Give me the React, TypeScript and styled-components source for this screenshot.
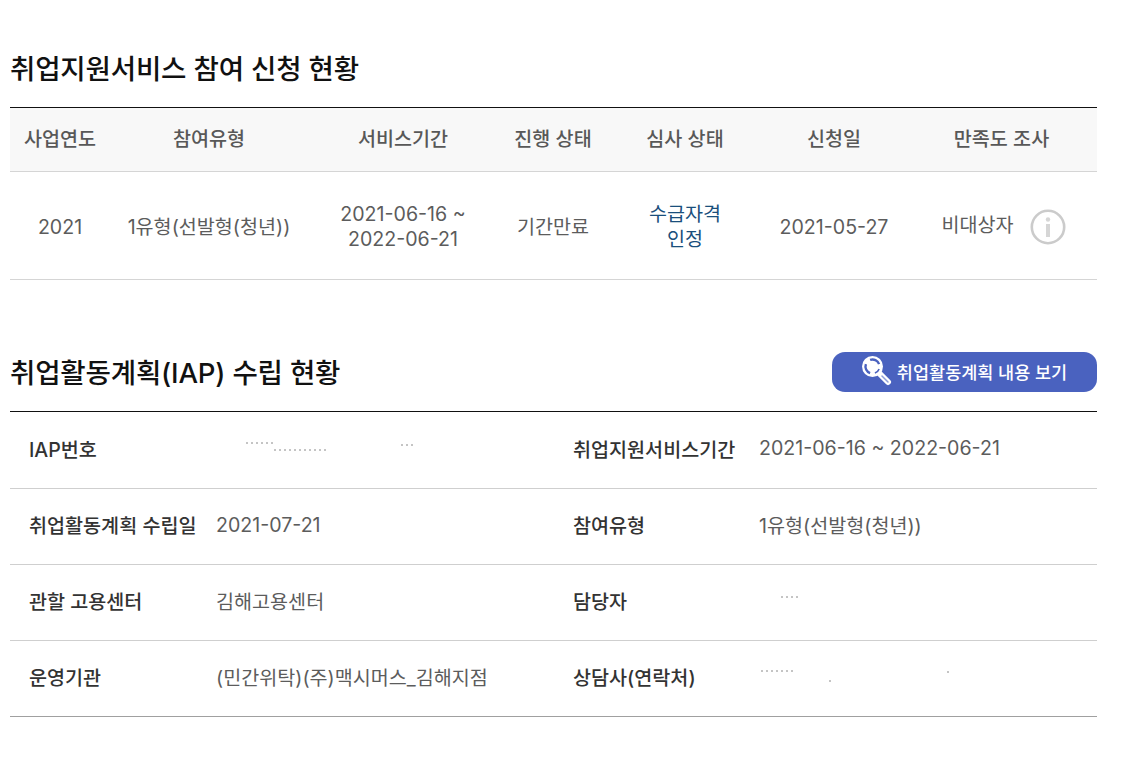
import React from "react";
import styled, { createGlobalStyle } from "styled-components";

const Global = createGlobalStyle`
  html, body { margin: 0; padding: 0; background: #fff; }
  body { font-family: Inter, "Noto Sans CJK KR", sans-serif; }
  *, *::before, *::after { box-sizing: border-box; }
`;

const Page = styled.main`
  width: 1097px;
  padding: 50px 0 0 10px;
`;

const HeadRow = styled.div<{ $h: number; $gap: number }>`
  display: flex;
  align-items: center;
  justify-content: space-between;
  height: ${(p) => p.$h}px;
  margin-bottom: ${(p) => p.$gap}px;
`;

const Title = styled.h2`
  margin: 0;
  padding-top: 2px;
  font-size: 27.6px;
  font-weight: 500;
  line-height: 36px;
  letter-spacing: -0.2px;
  color: #111;
`;

const Table = styled.table`
  width: 100%;
  border-collapse: collapse;
  table-layout: fixed;
  border-top: 1px solid #111;
`;

const Th = styled.th`
  height: 64px;
  padding: 0 0 4px;
  background: #f8f8f8;
  border-bottom: 1px solid #d5d5d5;
  font-size: 19.6px;
  font-weight: 500;
  color: #585858;
  text-align: center;
`;

const Td = styled.td<{ $link?: boolean }>`
  height: 108px;
  padding: 3px 0 0;
  border-bottom: 1px solid #d5d5d5;
  font-size: 19.6px;
  line-height: 25px;
  font-weight: 400;
  color: ${(p) => (p.$link ? "#1a4f7c" : "#5c5c5c")};
  text-align: center;
`;

const SurveyCell = styled.div`
  display: flex;
  align-items: center;
  justify-content: center;
  gap: 16px;
  padding-left: 4px;
`;

const SurveyText = styled.span`
  padding-bottom: 4px;
`;

const Section2 = styled.section`
  margin-top: 72px;
`;

const ViewButton = styled.button`
  display: flex;
  align-items: center;
  justify-content: center;
  gap: 5px;
  width: 265px;
  height: 40px;
  padding: 0 0 2px 0;
  border: 0;
  border-radius: 13px;
  background: #4a62bf;
  color: #fff;
  font-family: inherit;
  font-size: 17.5px;
  font-weight: 500;
`;

const InfoGrid = styled.div`
  border-top: 1px solid #111;
`;

const InfoRow = styled.div`
  display: grid;
  grid-template-columns: 187px 357px 186px 1fr;
  align-items: center;
  height: 76px;
  padding: 0 0 4px 19px;
  border-bottom: 1px solid #cfcfcf;

  &:first-child {
    height: 77px;
  }

  &:last-child {
    border-bottom-color: #a0a0a0;
  }
`;

const Label = styled.div`
  font-size: 19.6px;
  font-weight: 500;
  color: #333;
  white-space: nowrap;
`;

const Value = styled.div`
  font-size: 19.6px;
  font-weight: 400;
  color: #5c5c5c;
  white-space: nowrap;
`;

const Specks = styled.svg`
  display: block;
`;

const InfoIcon = () => (
  <svg width="36" height="36" viewBox="0 0 36 36" aria-hidden="true">
    <circle cx="18" cy="18" r="16.2" fill="#fff" stroke="#cbcbcb" strokeWidth="2.6" />
    <circle cx="18" cy="10.5" r="2.2" fill="#d6d6d6" />
    <rect x="16" y="15" width="4" height="13" fill="#d6d6d6" />
  </svg>
);

const SearchIcon = () => (
  <svg width="30" height="30" viewBox="0 0 30 30" aria-hidden="true">
    <path d="M18 18l8 8" stroke="#fff" strokeWidth="6" strokeLinecap="round" />
    <path d="M20 20l6 6" stroke="#8f9fd8" strokeWidth="1.5" strokeLinecap="round" />
    <circle cx="10.5" cy="10.5" r="10.5" fill="#fff" />
    <path d="M8.1 3.900A7 7 0 0 1 17.100 8.100" stroke="#4a62bf" strokeWidth="2.4" fill="none" />
    <path d="M8.100 17.100A7 7 0 0 1 3.900 8.100" stroke="#4a62bf" strokeWidth="2.4" fill="none" />
    <path d="M17.100 12.900A7 7 0 0 1 12.900 17.100" stroke="#4a62bf" strokeWidth="1.6" fill="none" />
  </svg>
);

const Dashes = ({ w, h, d }: { w: number; h: number; d: string }) => (
  <Specks width={w} height={h} viewBox={`0 0 ${w} ${h}`} aria-hidden="true">
    <path d={d} stroke="#8a8a8a" strokeWidth="1" strokeDasharray="2 3" fill="none" />
  </Specks>
);

const columns = [100, 198, 190, 110, 154, 144, 191];
const heads = ["사업연도", "참여유형", "서비스기간", "진행 상태", "심사 상태", "신청일", "만족도 조사"];

export default function App() {
  return (
    <Page>
      <Global />
      <section>
        <HeadRow $h={36} $gap={21}>
          <Title>취업지원서비스 참여 신청 현황</Title>
        </HeadRow>
        <Table>
          <colgroup>
            {columns.map((c, i) => (
              <col key={i} style={{ width: c }} />
            ))}
          </colgroup>
          <thead>
            <tr>
              {heads.map((h) => (
                <Th key={h}>{h}</Th>
              ))}
            </tr>
          </thead>
          <tbody>
            <tr>
              <Td>2021</Td>
              <Td>1유형(선발형(청년))</Td>
              <Td>
                2021-06-16 ~
                <br />
                2022-06-21
              </Td>
              <Td>기간만료</Td>
              <Td $link>
                수급자격
                <br />
                인정
              </Td>
              <Td>2021-05-27</Td>
              <Td>
                <SurveyCell>
                  <SurveyText>비대상자</SurveyText>
                  <InfoIcon />
                </SurveyCell>
              </Td>
            </tr>
          </tbody>
        </Table>
      </section>
      <Section2>
        <HeadRow $h={40} $gap={19}>
          <Title>취업활동계획(IAP) 수립 현황</Title>
          <ViewButton>
            <SearchIcon />
            취업활동계획 내용 보기
          </ViewButton>
        </HeadRow>
        <InfoGrid>
          <InfoRow>
            <Label>IAP번호</Label>
            <Value>
              <Dashes w={200} h={16} d="M30 3H60M58 10H110M185 5H197" />
            </Value>
            <Label>취업지원서비스기간</Label>
            <Value>2021-06-16 ~ 2022-06-21</Value>
          </InfoRow>
          <InfoRow>
            <Label>취업활동계획 수립일</Label>
            <Value>2021-07-21</Value>
            <Label>참여유형</Label>
            <Value>1유형(선발형(청년))</Value>
          </InfoRow>
          <InfoRow>
            <Label>관할 고용센터</Label>
            <Value>김해고용센터</Value>
            <Label>담당자</Label>
            <Value>
              <Dashes w={60} h={16} d="M22 4H40" />
            </Value>
          </InfoRow>
          <InfoRow>
            <Label>운영기관</Label>
            <Value>(민간위탁)(주)맥시머스_김해지점</Value>
            <Label>상담사(연락처)</Label>
            <Value>
              <Dashes w={200} h={16} d="M2 2H36M70 12H74M188 3H192" />
            </Value>
          </InfoRow>
        </InfoGrid>
      </Section2>
    </Page>
  );
}
